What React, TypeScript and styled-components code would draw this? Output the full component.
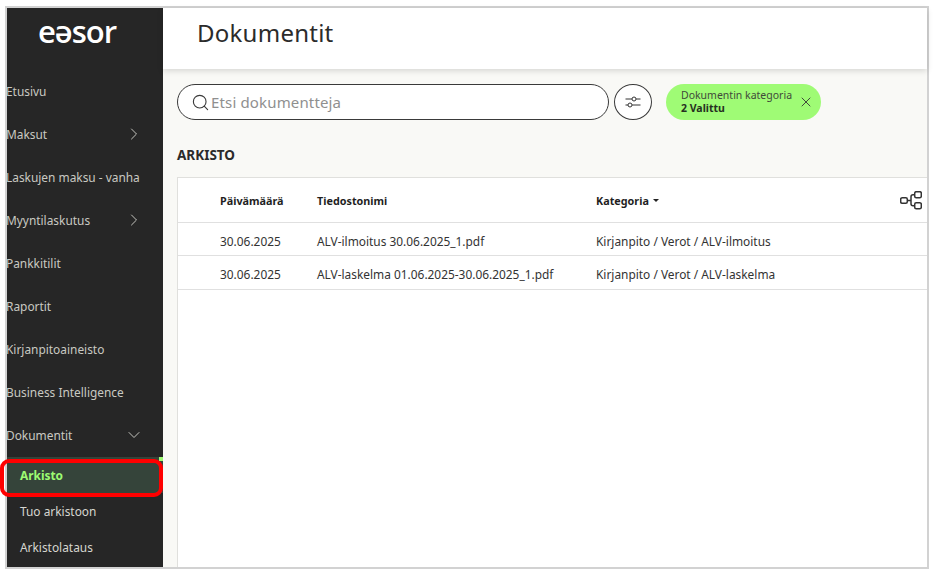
import styled, { createGlobalStyle } from "styled-components";
import { ChevronDown, ChevronRight, Search, X } from "lucide-react";

const GlobalStyle = createGlobalStyle`
  html, body {
    margin: 0;
    padding: 0;
    background: #fff;
    font-family: "Noto Sans", "Open Sans", sans-serif;
  }
`;

const Frame = styled.div`
  box-sizing: border-box;
  width: 924px;
  height: 563px;
  margin: 6px 0 0 5px;
  border: 2px solid #d2d2d2;
  display: flex;
`;

const Sidebar = styled.aside`
  width: 156px;
  flex: none;
  background: #262626;
  display: flex;
  flex-direction: column;
`;

const Logo = styled.div`
  height: 52px;
  padding: 3px 16px 0 0;
  text-align: center;
  color: #fff;
  font-family: "Open Sans", sans-serif;
  font-size: 31px;
  font-weight: 600;
  line-height: 40px;
  letter-spacing: -1px;
`;

const Nav = styled.nav`
  display: flex;
  flex-direction: column;
  padding-top: 6px;
`;

const NavItem = styled.div`
  height: 43px;
  display: flex;
  align-items: center;
  justify-content: space-between;
  margin-left: -1px;
  padding-right: 19px;
  color: #c9c9c2;
  font-size: 11.9px;
  white-space: nowrap;
  svg {
    color: #c4c4be;
  }
`;

const SubItem = styled.div<{ $active?: boolean }>`
  position: relative;
  height: 36px;
  display: flex;
  align-items: center;
  padding-left: 13px;
  font-size: 11.9px;
  font-weight: ${(p) => (p.$active ? 700 : 400)};
  color: ${(p) => (p.$active ? "#9dfb72" : "#d6d6d0")};
  background: ${(p) => (p.$active ? "#35443a" : "transparent")};
`;

const ActiveTick = styled.span`
  position: absolute;
  top: 0;
  right: 0;
  width: 4px;
  height: 4px;
  background: #9dfb72;
`;

const Highlight = styled.span`
  position: absolute;
  top: 2px;
  left: -7px;
  width: 163px;
  height: 38px;
  box-sizing: border-box;
  border: 4px solid #f00;
  border-radius: 9px;
`;

const SubList = styled.div`
  display: flex;
  flex-direction: column;
  margin-top: 1px;
`;

const Main = styled.main`
  flex: 1;
  min-width: 0;
  background: #f9f9f6;
  display: flex;
  flex-direction: column;
`;

const Header = styled.header`
  height: 61px;
  flex: none;
  background: #fff;
  box-shadow: 0 2px 6px rgba(0, 0, 0, 0.14);
  display: flex;
  align-items: center;
  padding: 0 0 12px 34px;
  box-sizing: border-box;
`;

const Title = styled.h1`
  margin: 0;
  font-size: 24px;
  font-weight: 400;
  letter-spacing: 0.25px;
  color: #2b2b2b;
`;

const Toolbar = styled.div`
  display: flex;
  align-items: center;
  padding: 15px 0 0 14px;
`;

const SearchBox = styled.div`
  box-sizing: border-box;
  width: 432px;
  height: 36px;
  border: 1px solid #3a3a3a;
  border-radius: 18px;
  background: #fff;
  display: flex;
  align-items: center;
  gap: 1px;
  padding-left: 13px;
  color: #8f8f8f;
  font-size: 15px;
  letter-spacing: 0.15px;
  svg {
    color: #3a3a3a;
  }
`;

const FilterButton = styled.div`
  box-sizing: border-box;
  width: 38px;
  height: 36px;
  margin-left: 5px;
  border: 1px solid #3a3a3a;
  border-radius: 50%;
  background: #fff;
  display: flex;
  align-items: center;
  justify-content: center;
`;

const Chip = styled.div`
  box-sizing: border-box;
  width: 155px;
  height: 36px;
  margin-left: 14px;
  padding-left: 15px;
  border-radius: 18px;
  background: #9ffb75;
  display: flex;
  align-items: center;
  justify-content: space-between;
  padding-right: 7px;
  color: #3f4a3a;
  svg {
    color: #3f4a3a;
  }
`;

const ChipText = styled.div`
  font-size: 10.5px;
  line-height: 13px;
  strong {
    display: block;
    font-weight: 700;
    color: #26301f;
  }
`;

const SectionTitle = styled.h2`
  margin: 0;
  padding: 25px 0 0 14px;
  font-size: 13.5px;
  line-height: 20px;
  font-weight: 700;
  color: #2b2b2b;
`;

const TableCard = styled.section`
  flex: 1;
  margin: 12px 0 0 14px;
  background: #fff;
  border: 1px solid #e0e0dd;
  border-right: 0;
  border-bottom: 0;
`;

const Row = styled.div<{ $head?: boolean }>`
  box-sizing: border-box;
  display: grid;
  grid-template-columns: 42px 97px 279px 1fr 27px;
  align-items: center;
  height: ${(p) => (p.$head ? "45px" : "33.3px")};
  padding-top: ${(p) => (p.$head ? "0" : "4px")};
  border-bottom: 1px solid #e0e0e0;
  font-size: ${(p) => (p.$head ? "10.8px" : "11.9px")};
  font-weight: ${(p) => (p.$head ? 700 : 400)};
  color: ${(p) => (p.$head ? "#1f1f1f" : "#333")};
`;

const Cell = styled.div`
  white-space: nowrap;
`;

const SortCell = styled(Cell)`
  display: flex;
  align-items: center;
  gap: 4px;
`;

const SortCaret = styled.span`
  width: 0;
  height: 0;
  border-left: 3px solid transparent;
  border-right: 3px solid transparent;
  border-top: 3px solid #222;
`;

const IconCell = styled.div`
  display: flex;
  align-items: center;
  color: #333;
`;

const rows = [
  {
    date: "30.06.2025",
    file: "ALV-ilmoitus 30.06.2025_1.pdf",
    category: "Kirjanpito / Verot / ALV-ilmoitus",
  },
  {
    date: "30.06.2025",
    file: "ALV-laskelma 01.06.2025-30.06.2025_1.pdf",
    category: "Kirjanpito / Verot / ALV-laskelma",
  },
];

const FilterIcon = () => (
  <svg width="16" height="14" viewBox="0 0 16 14" fill="none" stroke="#333" strokeWidth="1">
    <path d="M0.5 4H7M11 4H15.5M0.5 10H3M7 10H15.5" />
    <circle cx="9" cy="4" r="2" />
    <circle cx="5" cy="10" r="2" />
  </svg>
);

const TreeIcon = () => (
  <svg width="22" height="19" viewBox="0 0 22 19" fill="none" stroke="currentColor" strokeWidth="1.5">
    <rect x="0.7" y="6.7" width="6.6" height="5.6" rx="1.5" />
    <rect x="14.7" y="0.7" width="6.6" height="6" rx="1.5" />
    <rect x="14.7" y="11.7" width="6.6" height="6" rx="1.5" />
    <path d="M7.5 9.5H11M14.5 3.7H13Q11 3.7 11 5.7V12.7Q11 14.7 13 14.7H14.5" />
  </svg>
);

const App = () => {
  return (
    <>
      <GlobalStyle />
      <Frame>
        <Sidebar>
          <Logo>eəsor</Logo>
          <Nav>
            <NavItem>Etusivu</NavItem>
            <NavItem>
              Maksut
              <ChevronRight size={20} strokeWidth={1.2} />
            </NavItem>
            <NavItem>Laskujen maksu - vanha</NavItem>
            <NavItem>
              Myyntilaskutus
              <ChevronRight size={20} strokeWidth={1.2} />
            </NavItem>
            <NavItem>Pankkitilit</NavItem>
            <NavItem>Raportit</NavItem>
            <NavItem>Kirjanpitoaineisto</NavItem>
            <NavItem>Business Intelligence</NavItem>
            <NavItem>
              Dokumentit
              <ChevronDown size={20} strokeWidth={1.2} />
            </NavItem>
          </Nav>
          <SubList>
            <SubItem $active>
              Arkisto
              <ActiveTick />
              <Highlight />
            </SubItem>
            <SubItem>Tuo arkistoon</SubItem>
            <SubItem>Arkistolataus</SubItem>
          </SubList>
        </Sidebar>
        <Main>
          <Header>
            <Title>Dokumentit</Title>
          </Header>
          <Toolbar>
            <SearchBox>
              <Search size={19} strokeWidth={1.4} />
              Etsi dokumentteja
            </SearchBox>
            <FilterButton>
              <FilterIcon />
            </FilterButton>
            <Chip>
              <ChipText>
                Dokumentin kategoria
                <strong>2 Valittu</strong>
              </ChipText>
              <X size={16} strokeWidth={1.5} />
            </Chip>
          </Toolbar>
          <SectionTitle>ARKISTO</SectionTitle>
          <TableCard>
            <Row $head>
              <span />
              <Cell>Päivämäärä</Cell>
              <Cell>Tiedostonimi</Cell>
              <SortCell>
                Kategoria
                <SortCaret />
              </SortCell>
              <IconCell>
                <TreeIcon />
              </IconCell>
            </Row>
            {rows.map((row) => (
              <Row key={row.file}>
                <span />
                <Cell>{row.date}</Cell>
                <Cell>{row.file}</Cell>
                <Cell>{row.category}</Cell>
                <span />
              </Row>
            ))}
          </TableCard>
        </Main>
      </Frame>
    </>
  );
};

export default App;
